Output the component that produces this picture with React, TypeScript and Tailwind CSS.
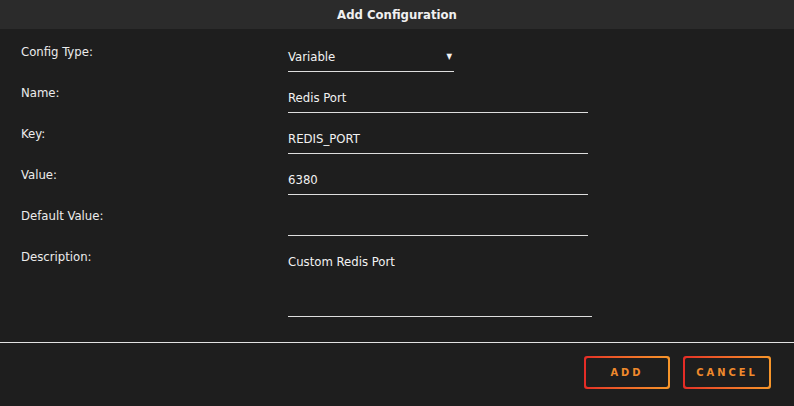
import React from "react";

const font = { fontFamily: "'DejaVu Sans', sans-serif", fontStretch: "condensed" as const };

const fields = [
  { label: "Name:", value: "Redis Port" },
  { label: "Key:", value: "REDIS_PORT" },
  { label: "Value:", value: "6380" },
  { label: "Default Value:", value: "" },
];

const Row = ({ label, children }: { label: string; children: React.ReactNode }) => (
  <div className="flex items-start">
    <div className="w-[288px] pl-[21px] pt-[4px] text-[13px] leading-4 text-[#ececec]">{label}</div>
    {children}
  </div>
);

const GradButton = ({ text, w }: { text: string; w: string }) => (
  <div className={`rounded-[3px] bg-gradient-to-r from-[#e42a26] to-[#f7962a] p-[2px] ${w}`}>
    <div className="flex h-[29px] items-center justify-center rounded-[2px] bg-[#1e1e1e] pt-[2px] text-[11px] font-bold tracking-[3px] text-[#f08a2c]">
      {text}
    </div>
  </div>
);

export default function App() {
  return (
    <div className="flex h-[406px] w-[794px] flex-col bg-[#1e1e1e]" style={font}>
      <div className="flex h-[29px] items-center justify-center bg-[#2b2b2b] text-[13px] font-bold text-[#f0f0f0]">
        Add Configuration
      </div>
      <div className="flex flex-col pt-[11px]">
        <div className="h-[41px]">
          <Row label="Config Type:">
            <div className="mt-[9px] flex h-[23px] w-[166px] items-start justify-between border-b border-[#dedede] text-[13px] leading-4 text-[#f2f2f2]">
              <span>Variable</span>
              <span className="mr-[2px] text-[8px]">▼</span>
            </div>
          </Row>
        </div>
        {fields.map((f) => (
          <div key={f.label} className="h-[41px]">
            <Row label={f.label}>
              <div className="mt-[9px] h-[23px] w-[300px] border-b border-[#dedede] text-[13px] leading-4 text-[#f2f2f2]">
                {f.value}
              </div>
            </Row>
          </div>
        ))}
        <Row label="Description:">
          <div className="mt-[9px] h-[63px] w-[304px] border-b border-[#dedede] text-[13px] leading-4 text-[#f2f2f2]">
            Custom Redis Port
          </div>
        </Row>
      </div>
      <div className="mt-[25px] h-px w-full bg-[#e2e2e2]" />
      <div className="flex justify-end gap-[13px] pr-[23px] pt-[13px]">
        <GradButton text="ADD" w="w-[86px]" />
        <GradButton text="CANCEL" w="w-[88px]" />
      </div>
    </div>
  );
}
